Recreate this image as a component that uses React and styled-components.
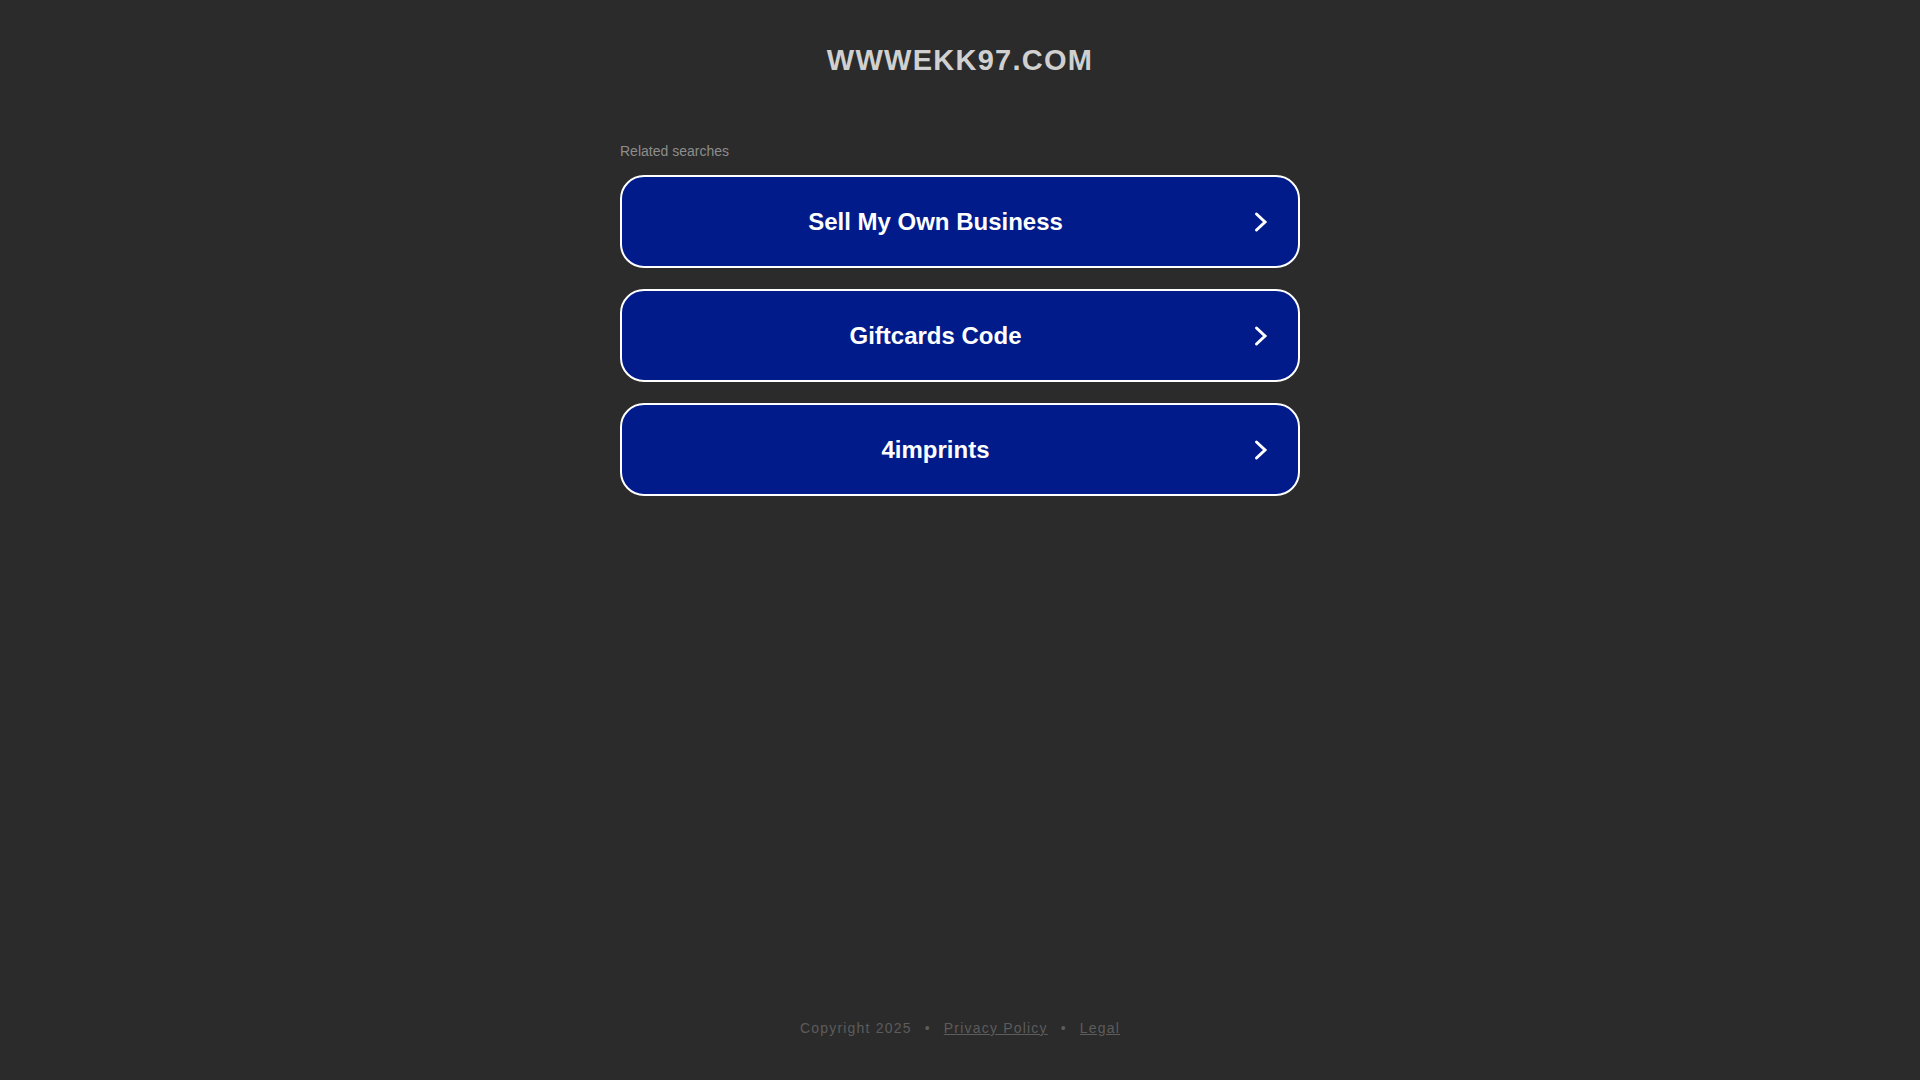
import styled, { createGlobalStyle } from "styled-components";

const GlobalStyle = createGlobalStyle`
  html, body {
    margin: 0;
    padding: 0;
    background: #2b2b2b;
  }
  body {
    font-family: "Liberation Sans", Arial, sans-serif;
  }
`;

const Page = styled.div`
  display: flex;
  flex-direction: column;
  align-items: center;
  min-height: 100vh;
  box-sizing: border-box;
  padding-top: 44px;
  padding-bottom: 44px;
`;

const Domain = styled.h1`
  margin: 0;
  font-size: 29px;
  line-height: 33px;
  font-weight: bold;
  letter-spacing: 1.25px;
  color: #d0d0d0;
`;

const Searches = styled.div`
  width: 680px;
  margin-top: 66px;
  display: flex;
  flex-direction: column;
`;

const Heading = styled.div`
  font-size: 14px;
  line-height: 16px;
  color: #8d8d8d;
  margin-bottom: 16px;
`;

const List = styled.div`
  display: flex;
  flex-direction: column;
  gap: 21px;
`;

const SearchLink = styled.a`
  display: flex;
  align-items: center;
  height: 93px;
  box-sizing: border-box;
  border: 2px solid #ffffff;
  border-radius: 24px;
  background: #011b8b;
  color: #ffffff;
  text-decoration: none;
  padding-right: 25px;
  cursor: pointer;
`;

const Label = styled.span`
  flex: 1;
  text-align: center;
  font-size: 24px;
  font-weight: bold;
`;

const Footer = styled.footer`
  margin-top: auto;
  font-size: 14px;
  line-height: 16px;
  letter-spacing: 1.2px;
  color: #5c5c5c;
`;

const FooterLink = styled.a`
  color: #5c5c5c;
  text-decoration: underline;
`;

const Dot = styled.span`
  margin: 0 13px;
`;

const Chevron = () => (
  <svg width="24" height="24" viewBox="0 0 24 24" fill="none">
    <polyline
      points="7.5,4 16,12 7.5,20"
      stroke="#ffffff"
      strokeWidth="3"
      strokeLinecap="round"
      strokeLinejoin="miter"
    />
  </svg>
);

const searches = ["Sell My Own Business", "Giftcards Code", "4imprints"];

export default function App() {
  return (
    <>
      <GlobalStyle />
      <Page>
        <Domain>WWWEKK97.COM</Domain>
        <Searches>
          <Heading>Related searches</Heading>
          <List>
            {searches.map((s) => (
              <SearchLink key={s}>
                <Label>{s}</Label>
                <Chevron />
              </SearchLink>
            ))}
          </List>
        </Searches>
        <Footer>
          Copyright 2025
          <Dot>•</Dot>
          <FooterLink>Privacy Policy</FooterLink>
          <Dot>•</Dot>
          <FooterLink>Legal</FooterLink>
        </Footer>
      </Page>
    </>
  );
}
